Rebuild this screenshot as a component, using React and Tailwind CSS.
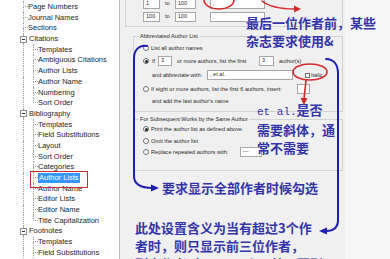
import React from "react";

const rows = [
  { t: "Anonymous Works", l: 0 },
  { t: "Page Numbers", l: 0 },
  { t: "Journal Names", l: 0 },
  { t: "Sections", l: 0 },
  { t: "Citations", l: 0, exp: true },
  { t: "Templates", l: 1 },
  { t: "Ambiguous Citations", l: 1 },
  { t: "Author Lists", l: 1 },
  { t: "Author Name", l: 1 },
  { t: "Numbering", l: 1 },
  { t: "Sort Order", l: 1, last: true },
  { t: "Bibliography", l: 0, exp: true },
  { t: "Templates", l: 1 },
  { t: "Field Substitutions", l: 1 },
  { t: "Layout", l: 1 },
  { t: "Sort Order", l: 1 },
  { t: "Categories", l: 1 },
  { t: "Author Lists", l: 1, sel: true },
  { t: "Author Name", l: 1 },
  { t: "Editor Lists", l: 1 },
  { t: "Editor Name", l: 1 },
  { t: "Title Capitalization", l: 1, last: true },
  { t: "Footnotes", l: 0, exp: true },
  { t: "Templates", l: 1 },
  { t: "Field Substitutions", l: 1 },
];

const LINE = "border-dotted border-[#a3a3a3]";

function Elbow({ last }) {
  return (
    <div className="flex w-[5px] shrink-0 flex-col">
      <div className={"h-1/2 border-b border-l " + LINE} />
      {last ? <div className="flex-1" /> : <div className={"flex-1 border-l " + LINE} />}
    </div>
  );
}

function Label({ r }) {
  return (
    <span
      className={
        r.sel
          ? "self-center whitespace-nowrap bg-[#3399ff] px-[1px] leading-[10px] text-white"
          : "self-center whitespace-nowrap leading-[10px]"
      }
    >
      {r.t}
    </span>
  );
}

function TreeRow({ r }) {
  if (r.exp) {
    return (
      <div className="flex h-[10.7px] items-stretch">
        <div className="w-[20px] shrink-0" />
        <div className="flex w-[7px] shrink-0 flex-col items-center">
          <div className={"flex-1 border-l " + LINE} />
          <div className="flex h-[7px] w-[7px] items-center justify-center border border-[#8f8f8f] bg-white">
            <div className="h-px w-[3px] bg-[#333]" />
          </div>
          <div className={"flex-1 border-l " + LINE} />
        </div>
        <div className="w-[2px] shrink-0" />
        <Label r={r} />
      </div>
    );
  }
  if (r.l === 0) {
    return (
      <div className="flex h-[10.7px] items-stretch">
        <div className="w-[23px] shrink-0" />
        <Elbow last={false} />
        <Label r={r} />
      </div>
    );
  }
  return (
    <div className="flex h-[10.7px] items-stretch">
      <div className="w-[23px] shrink-0" />
      <div className={"w-[10px] shrink-0 border-l " + LINE} />
      <Elbow last={r.last} />
      <Label r={r} />
    </div>
  );
}

function Radio({ on }) {
  return (
    <span className="flex h-[6px] w-[6px] shrink-0 items-center justify-center rounded-full border border-[#6e6e6e] bg-white">
      {on ? <span className="h-[3px] w-[3px] rounded-full bg-[#222]" /> : null}
    </span>
  );
}

function Box({ w, children }) {
  return (
    <div
      className="flex h-[10px] shrink-0 items-center overflow-hidden border border-[#a7a7a7] bg-white pl-[2px] leading-none"
      style={{ width: w }}
    >
      {children}
    </div>
  );
}

export default function App() {
  const cjk = "font-['Noto_Sans_CJK_SC',sans-serif] text-[13px] font-bold leading-[18px] text-[#3434aa] whitespace-nowrap";
  return (
    <div className="relative flex h-[259px] w-[390px] overflow-hidden bg-white font-['Liberation_Sans',sans-serif] text-[#1e1e1e]">
      {/* Tree */}
      <div className="relative w-[120px] shrink-0 border-r border-[#bdbdbd] bg-white text-[7.5px] text-[#262626]">
        <div className="-mt-[9px] flex flex-col">
          {rows.map((r, i) => (
            <TreeRow key={i} r={r} />
          ))}
        </div>
        <div className="absolute left-[30px] top-[171px] h-[17px] w-[58px] border-[1.5px] border-[#c62d2d]" />
      </div>

      {/* Right panel */}
      <div className="relative flex flex-1 text-[5.6px] text-[#2a2a2a]">
        <div className="w-[225px] shrink-0 bg-[#f0f0f0]">
          {/* top group */}
          <div className="-mt-[4px] ml-[5px] mr-[2px] flex h-[31px] flex-col gap-[2px] border border-t-0 border-[#d2d2d2] pl-[17px] pt-[2px]">
            {[
              ["1", "100"],
              ["100", "100"],
            ].map(([a, b], i) => (
              <div key={i} className="flex h-[11px] items-center">
                <Box w="17px">{a}</Box>
                <span className="ml-[5px]">to</span>
                <div className="ml-[5px]">
                  <Box w="21px">{b}</Box>
                </div>
                <div className="ml-[14px]">
                  <Box w="55px">,</Box>
                </div>
              </div>
            ))}
          </div>

          {/* Abbreviated Author List */}
          <fieldset className="ml-[13px] mt-[5px] w-[210px] border border-[#d2d2d2] pb-[3px]">
            <legend className="ml-[5px] px-[1px] leading-[8px]">Abbreviated Author List</legend>
            <div className="flex flex-col pl-[9px]">
              <div className="flex h-[16px] items-center gap-[2px]">
                <Radio />
                <span>List all author names</span>
              </div>
              <div className="flex h-[10px] items-center">
                <Radio on />
                <span className="ml-[3px] w-[4px]">If</span>
                <div className="ml-[2px]">
                  <Box w="14px">3</Box>
                </div>
                <span className="ml-[5px] w-[82px] whitespace-nowrap">or more authors, list the first</span>
                <Box w="15px">3</Box>
                <span className="ml-[5px] whitespace-nowrap">author(s)</span>
              </div>
              <div className="flex h-[18px] items-center pl-[9px]">
                <span className="w-[55px] whitespace-nowrap">and abbreviate with:</span>
                <Box w="86px">, et al.</Box>
                <span className="ml-[12px] h-[5px] w-[5px] border border-[#707070] bg-white" />
                <span className="ml-[1px]">Italic</span>
              </div>
              <div className="flex h-[10px] items-center">
                <Radio />
                <span className="ml-[2px] w-[146px] whitespace-nowrap">
                  If eight or more authors, list the first 6 authors, insert:
                </span>
                <Box w="13px"></Box>
              </div>
              <div className="flex h-[14px] items-center pl-[9px]">
                <span className="whitespace-nowrap">and add the last author&apos;s name</span>
              </div>
            </div>
          </fieldset>

          {/* For Subsequent Works */}
          <fieldset className="ml-[13px] mt-[3px] w-[210px] border border-[#d2d2d2] pb-[13px]">
            <legend className="ml-[5px] px-[1px] leading-[8px]">For Subsequent Works by the Same Author</legend>
            <div className="flex flex-col pl-[9px]">
              <div className="flex h-[12px] items-center gap-[2px]">
                <Radio on />
                <span className="whitespace-nowrap">Print the author list as defined above</span>
              </div>
              <div className="flex h-[12px] items-center gap-[2px]">
                <Radio />
                <span className="whitespace-nowrap">Omit the author list</span>
              </div>
              <div className="flex h-[10px] items-center">
                <Radio />
                <span className="ml-[2px] w-[89px] whitespace-nowrap">Replace repeated authors with:</span>
                <Box w="22px">---</Box>
              </div>
            </div>
          </fieldset>
        </div>
        <div className="flex-1 bg-[#f6f6f6]" />

        {/* annotations */}
        <div className={"absolute left-[126px] top-[14px] " + cjk}>
          <div>最后一位作者前，某些</div>
          <div>杂志要求使用&amp;</div>
        </div>
        <div className={"absolute left-[137px] top-[101px] " + cjk}>
          <div>
            <span className="font-['Liberation_Mono',monospace] text-[11px] font-normal">et al.</span>是否
          </div>
          <div>需要斜体，通</div>
          <div>常不需要</div>
        </div>
        <div className={"absolute left-[42px] top-[179px] " + cjk}>要求显示全部作者时候勾选</div>
        <div className={"absolute left-[15px] top-[219px] " + cjk}>
          <div>此处设置含义为当有超过3个作</div>
          <div>者时，则只显示前三位作者，</div>
          <div>列全作者时，用et al.代替，否则</div>
        </div>
      </div>

      {/* drawn marks */}
      <svg className="pointer-events-none absolute left-0 top-0" width="390" height="259" viewBox="0 0 390 259">
        <g fill="none" stroke="#1e1eb0" strokeWidth="2" strokeLinecap="round">
          <path d="M147 46 C139 45 134 50 134 58 L134 176 C134 184 140 188 153 188" />
          <path d="M326 59 C334 59 338 65 338 74 L338 220 C338 228 333 231 326 231" />
        </g>
        <g fill="#1e1eb0">
          <polygon points="151,184.5 159,188 151,191.5" />
          <polygon points="327,227.5 319,231 327,234.5" />
        </g>
        <g fill="none" stroke="#d42a2a" strokeWidth="1.6" strokeLinecap="round">
          <ellipse cx="219" cy="0" rx="15" ry="9" />
          <path d="M262 1 Q272 9 295 9" />
          <ellipse cx="310" cy="72" rx="17" ry="8" />
          <path d="M306 80 L304 99" />
        </g>
        <g fill="#d42a2a">
          <polygon points="294,5.5 301,9 294,12.5" />
          <polygon points="300.5,98 304,105 307.5,98" />
        </g>
      </svg>
    </div>
  );
}
